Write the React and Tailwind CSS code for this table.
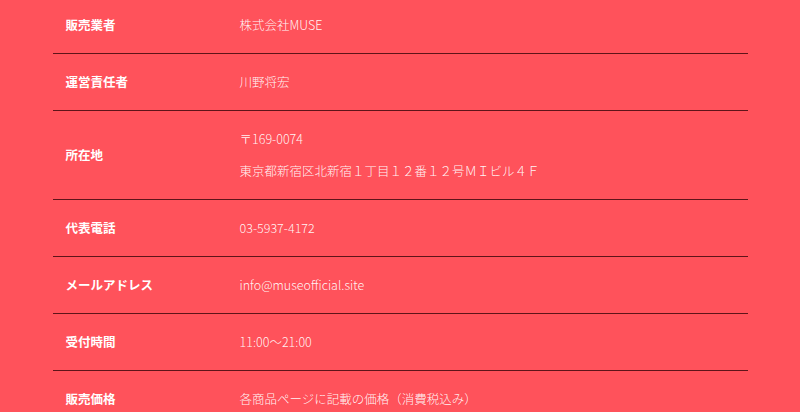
import React from "react";

const rows = [
    { label: "販売業者", value: ["株式会社MUSE"] },
    { label: "運営責任者", value: ["川野将宏"] },
    { label: "所在地", value: ["〒169-0074", "東京都新宿区北新宿１丁目１２番１２号ＭＩビル４Ｆ"] },
    { label: "代表電話", value: ["03-5937-4172"] },
    { label: "メールアドレス", value: ["info@museofficial.site"] },
    { label: "受付時間", value: ["11:00〜21:00"] },
    { label: "販売価格", value: ["各商品ページに記載の価格（消費税込み）"] },
];

export default function App() {
    return (
        <div
            className="w-[800px] h-[412px] overflow-hidden bg-[#ff525b] text-white text-[12.5px]"
            style={{ fontFamily: '"Noto Sans CJK JP", "Noto Sans", sans-serif' }}
        >
            <div className="mx-auto w-[695px] -mt-[3px]">
                {rows.map((row) => (
                    <div
                        key={row.label}
                        className="flex items-center border-b border-[#5e1419] py-[18px]"
                    >
                        <div className="w-[187px] pl-[13px] font-bold">{row.label}</div>
                        <div className="flex-1 flex flex-col gap-[12px] font-light text-white/95">
                            {row.value.map((v) => (
                                <p key={v} className="leading-[20px]">{v}</p>
                            ))}
                        </div>
                    </div>
                ))}
            </div>
        </div>
    );
}
